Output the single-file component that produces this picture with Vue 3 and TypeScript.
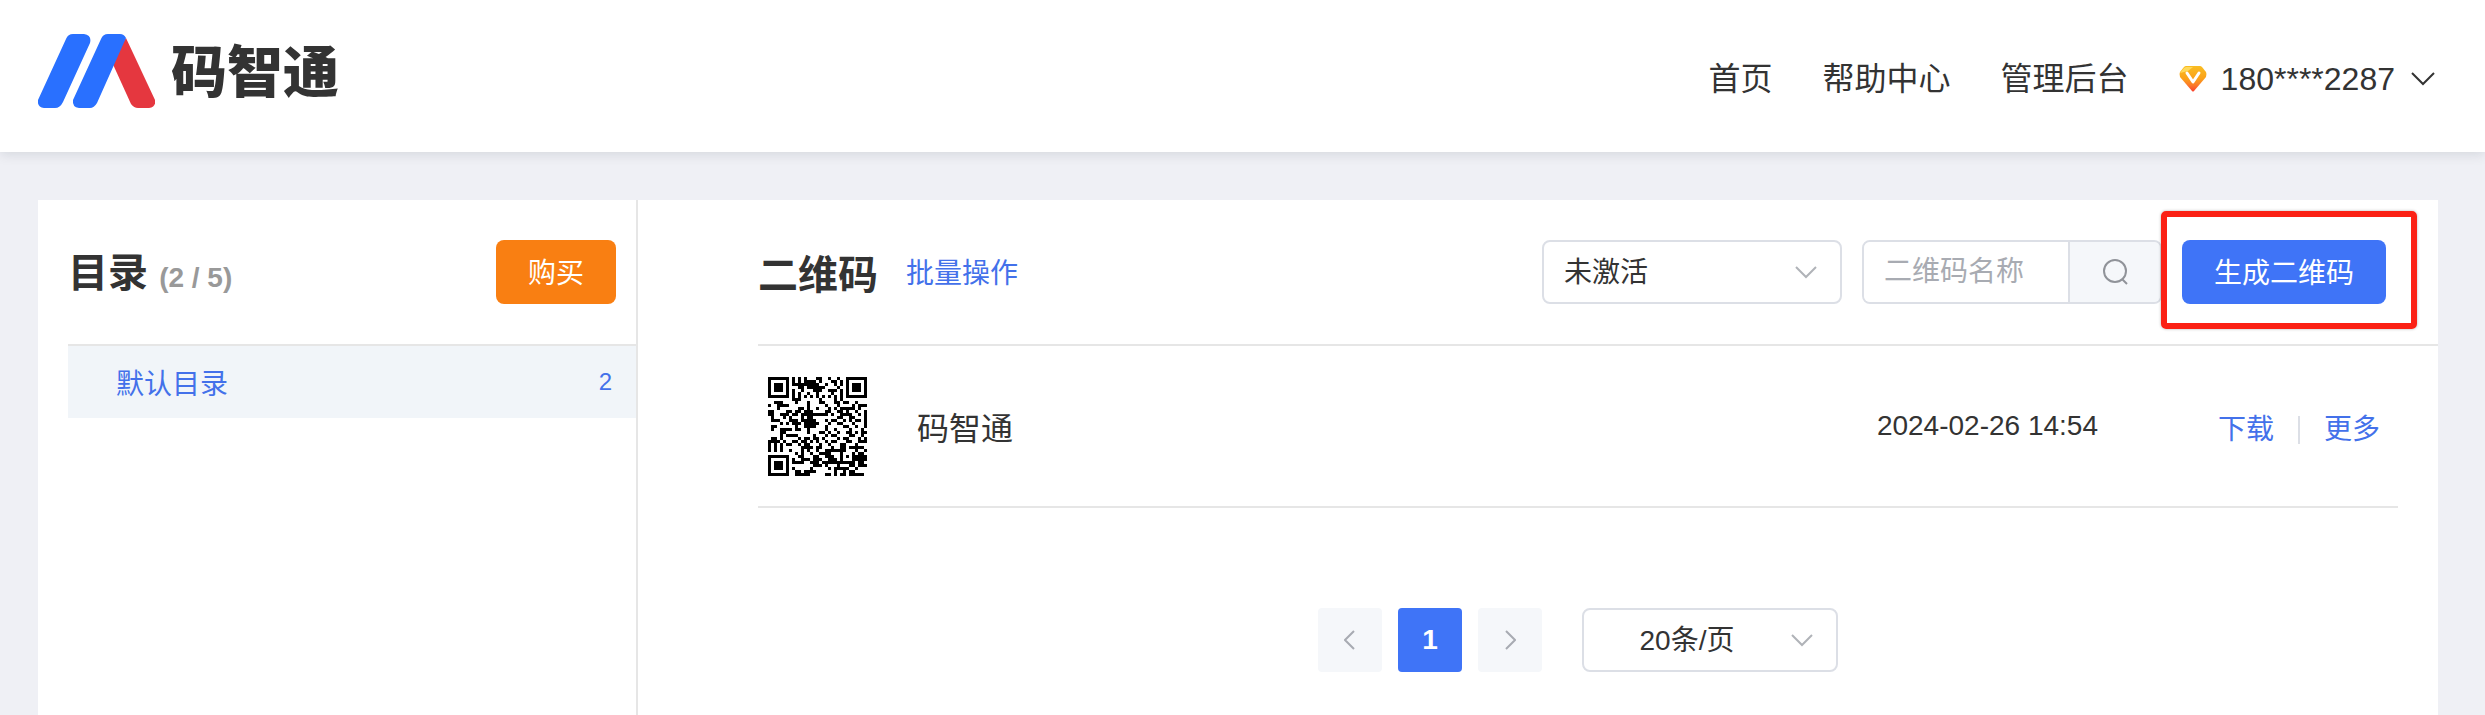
<script setup lang="ts">
import { ref } from 'vue'

interface Directory { name: string; count: number }
interface Code { name: string; createdAt: string }

const navLinks: string[] = ['首页', '帮助中心', '管理后台']
const directories: Directory[] = [{ name: '默认目录', count: 2 }]
const codes: Code[] = [{ name: '码智通', createdAt: '2024-02-26 14:54' }]
const status = ref('未激活')
const pageSize = ref('20条/页')
const keyword = ref('')

const modules: string[] = [
  '111111101010100011001001001111111',
  '100000101010111101000110101000001',
  '101110101111111110010010101011101',
  '101110100011011111100001001011101',
  '101110101001000111001110101011101',
  '100000101010010010000100101000001',
  '111111101010101010101010101111111',
  '000000001110000001000010100000000',
  '001110000100010001100011011001000',
  '100111100000010000010001000010111',
  '000100000011010010001010111110100',
  '110000110110111000011001101001001',
  '110011101101111111110100111100101',
  '010001010001011000000001100110001',
  '011100011101111100010110010101101',
  '000010101110111110001001100010001',
  '011000000100111100010000011001001',
  '010011110110010000010010000100010',
  '000011000000010001101001001101011',
  '000010111100000100010110000110010',
  '011010000010110110100001011000101',
  '111101001101101010010110001100111',
  '101010110010110001001000110001000',
  '101010000001111011000100110111110',
  '101010010001010010011111110001001',
  '000000000101001001111000100010110',
  '111111100011000110011100101011111',
  '100000101001110111001110100011111',
  '101110101111001110111111111110110',
  '101110100000000111010001000110111',
  '101110101000001000001011111001000',
  '100000100110111100000010010110000',
  '111111100111110000011010110111110',
]
const qrPath = modules
  .map((row, y) => [...row].map((bit, x) => (bit === '1' ? `M${x} ${y}h1v1h-1z` : '')).join(''))
  .join('')
</script>

<template>
  <div class="page">
    <header class="topbar">
      <a class="brand" href="#">
        <svg class="brand-mark" viewBox="0 0 117 74" aria-hidden="true">
          <path fill="#2970ff" d="M35 0H46Q54 1 52 9L25 68Q22 74 17 74H6Q-1 73 0 66L28 5Q30 0 35 0Z" />
          <path fill="#e5373f" d="M88 4L117 66Q118 73 111 74H100Q96 74 93 70L73 26Z" />
          <path fill="#2970ff" d="M70 0H82Q86 0 88 4L59 69Q56 74 52 74H41Q34 73 35 66L63 5Q65 0 70 0Z" />
        </svg>
        <span class="brand-name">码智通</span>
      </a>
      <nav class="nav">
        <a v-for="link in navLinks" :key="link" href="#">{{ link }}</a>
        <button class="account" type="button">
          <svg class="gem" viewBox="0 0 28 26" aria-hidden="true">
            <defs>
              <linearGradient id="gem-fill" x1="0" y1="0" x2="0" y2="1">
                <stop offset="0" stop-color="#f9bd22" />
                <stop offset="0.5" stop-color="#fba119" />
                <stop offset="0.75" stop-color="#fb7a2a" />
                <stop offset="1" stop-color="#f9402d" />
              </linearGradient>
            </defs>
            <path fill="url(#gem-fill)" d="M7 0H21Q22 0 23 1L27 6Q28 8 27 11L15 25Q14 26 13 25L1 11Q0 8 1 6L5 1Q6 0 7 0Z" />
            <path fill="#ffd95a" d="M7 1H14L9 5L1 7L5 2Z" />
            <path fill="none" stroke="#fff" stroke-width="3" stroke-linecap="round" stroke-linejoin="round" d="M8 7L14 16L20 7" />
          </svg>
          <span>180****2287</span>
          <svg class="account-arrow" viewBox="0 0 24 14" aria-hidden="true"><path d="M1 1L12 12L23 1" /></svg>
        </button>
      </nav>
    </header>

    <div class="panel">
      <aside class="sidebar">
        <div class="sidebar-head">
          <h2 class="title">目录 <small>(2 / 5)</small></h2>
          <button class="btn buy" type="button">购买</button>
        </div>
        <a v-for="dir in directories" :key="dir.name" class="directory" href="#">
          <span>{{ dir.name }}</span>
          <span class="count">{{ dir.count }}</span>
        </a>
      </aside>

      <main class="content">
        <div class="toolbar">
          <h2 class="title">二维码</h2>
          <a class="batch" href="#">批量操作</a>
          <div class="select status">
            <select v-model="status" aria-label="状态">
              <option>未激活</option>
            </select>
            <svg viewBox="0 0 24 14" aria-hidden="true"><path d="M2 2L12 12L22 2" /></svg>
          </div>
          <form class="search" @submit.prevent>
            <input v-model="keyword" type="text" placeholder="二维码名称" aria-label="二维码名称" />
            <button type="submit" aria-label="搜索">
              <svg viewBox="0 0 24 24" aria-hidden="true"><circle cx="12" cy="11" r="11" /><path d="M19 19L24 24" /></svg>
            </button>
          </form>
          <div class="generate">
            <button class="btn primary" type="button">生成二维码</button>
            <div class="highlight"></div>
          </div>
        </div>

        <ul class="codes">
          <li v-for="code in codes" :key="code.name" class="code">
            <svg class="qr" viewBox="0 0 33 33" shape-rendering="crispEdges" role="img" aria-label="二维码"><path :d="qrPath" /></svg>
            <span class="code-name">{{ code.name }}</span>
            <time>{{ code.createdAt }}</time>
            <div class="actions">
              <a href="#">下载</a>
              <a href="#">更多</a>
            </div>
          </li>
        </ul>

        <div class="pagination">
          <button class="pager" type="button" disabled aria-label="上一页">
            <svg viewBox="0 0 12 20" aria-hidden="true"><path d="M10 1L1 10L10 19" /></svg>
          </button>
          <button class="pager current" type="button">1</button>
          <button class="pager" type="button" disabled aria-label="下一页">
            <svg viewBox="0 0 12 20" aria-hidden="true"><path d="M2 1L11 10L2 19" /></svg>
          </button>
          <div class="select size">
            <select v-model="pageSize" aria-label="每页条数">
              <option>20条/页</option>
            </select>
            <svg viewBox="0 0 24 14" aria-hidden="true"><path d="M2 2L12 12L22 2" /></svg>
          </div>
        </div>
      </main>
    </div>
  </div>
</template>

<style>
body {
  margin: 0;
  background: #eff0f5;
}
</style>

<style scoped>
.page,
.page * {
  box-sizing: border-box;
}
.page {
  display: flex;
  flex-direction: column;
  min-height: 100vh;
  font-family: "Liberation Sans", "Noto Sans CJK SC", sans-serif;
  font-size: 28px;
  color: #333;
}
a {
  color: #4371ea;
  text-decoration: none;
}
button,
select,
input {
  margin: 0;
  padding: 0;
  border: 0;
  font: inherit;
  color: inherit;
}
svg {
  flex: none;
  fill: none;
}
.topbar {
  display: flex;
  justify-content: space-between;
  height: 152px;
  padding: 0 50px 0 38px;
  background: #fff;
  box-shadow: 0 2px 12px rgba(0, 21, 41, 0.12);
}
.brand {
  display: flex;
  gap: 16px;
  height: 142px;
  align-items: center;
  color: #333;
}
.brand-mark {
  width: 117px;
  height: 74px;
}
.brand-name {
  padding-top: 4px;
  font-size: 56px;
  line-height: 72px;
  font-weight: 900;
}
.nav {
  display: flex;
  align-items: center;
  gap: 50px;
  padding-top: 6px;
  font-size: 32px;
  line-height: 40px;
}
.nav a {
  color: #333;
}
.account {
  display: flex;
  align-items: center;
  gap: 14px;
  background: none;
}
.gem {
  width: 28px;
  height: 26px;
}
.account-arrow {
  width: 24px;
  height: 14px;
  margin-left: 2px;
  stroke: #333;
  stroke-width: 2;
}
.panel {
  display: flex;
  flex: 1;
  margin: 48px 47px 0 38px;
  background: #fff;
}
.sidebar {
  width: 600px;
  padding-left: 30px;
  border-right: 2px solid #e6e6e6;
}
.sidebar-head,
.toolbar {
  display: flex;
  align-items: center;
  height: 146px;
  border-bottom: 2px solid #e6e6e6;
}
.sidebar-head {
  justify-content: space-between;
  padding-right: 20px;
}
.title {
  margin: 0;
  padding-top: 6px;
  font-size: 40px;
  line-height: 56px;
  font-weight: 700;
}
.title small {
  font-size: 28px;
  color: #999;
}
.btn {
  height: 64px;
  padding-bottom: 2px;
  border-radius: 8px;
  color: #fff;
}
.buy {
  width: 120px;
  background: #f97f12;
}
.directory {
  display: flex;
  align-items: center;
  justify-content: space-between;
  height: 72px;
  padding: 0 24px 0 48px;
  background: #f1f5f9;
}
.count {
  font-size: 24px;
}
.content {
  flex: 1;
  padding-left: 120px;
}
.toolbar {
  padding-right: 52px;
}
.batch {
  margin: 0 auto 0 28px;
  padding-bottom: 2px;
}
.select {
  position: relative;
  height: 64px;
}
.select select {
  width: 100%;
  height: 100%;
  padding: 0 64px 0 20px;
  border: 2px solid #dcdfe6;
  border-radius: 8px;
  background: #fff;
  appearance: none;
}
.select svg {
  position: absolute;
  top: 25px;
  right: 24px;
  width: 24px;
  height: 14px;
  stroke: #b0b3b8;
  stroke-width: 2;
  pointer-events: none;
}
.status {
  width: 300px;
}
.search {
  display: flex;
  width: 300px;
  height: 64px;
  margin: 0 20px;
  border: 2px solid #dcdfe6;
  border-radius: 8px;
  background: #f5f7fa;
  overflow: hidden;
}
.search input {
  flex: 1;
  min-width: 0;
  padding-left: 20px;
  border-right: 2px solid #dcdfe6;
  background: #fff;
  outline: none;
}
.search input::placeholder {
  color: #a8abb2;
  opacity: 1;
}
.search button {
  display: flex;
  align-items: center;
  justify-content: center;
  width: 90px;
  background: #f5f7fa;
}
.search svg {
  width: 24px;
  height: 24px;
  overflow: visible;
  stroke: #909399;
  stroke-width: 2;
}
.generate {
  position: relative;
}
.primary {
  width: 204px;
  background: #3f74f7;
}
.highlight {
  position: absolute;
  inset: -29px -31px -25px -21px;
  border: 6px solid #fb2115;
  border-radius: 5px;
  box-shadow: 0 0 3px rgba(0, 0, 0, 0.3);
  pointer-events: none;
}
.codes {
  margin: 0 40px 0 0;
  padding: 0;
  list-style: none;
}
.code {
  display: flex;
  align-items: center;
  height: 162px;
  padding: 0 18px 0 10px;
  border-bottom: 2px solid #e6e6e6;
}
.qr {
  width: 99px;
  height: 99px;
  fill: #000;
}
.code-name {
  margin: 0 auto 0 50px;
  font-size: 32px;
}
.actions {
  display: flex;
  margin-left: 120px;
  padding-top: 8px;
}
.actions a {
  line-height: 28px;
}
.actions a + a {
  margin-left: 24px;
  padding-left: 24px;
  border-left: 2px solid #dcdfe6;
}
.pagination {
  display: flex;
  justify-content: center;
  gap: 16px;
  margin: 100px 40px 40px 0;
}
.pager {
  display: flex;
  align-items: center;
  justify-content: center;
  width: 64px;
  height: 64px;
  border-radius: 4px;
  background: #f5f7fa;
}
.pager svg {
  width: 12px;
  height: 20px;
  stroke: #a8abb2;
  stroke-width: 2;
}
.pager.current {
  background: #3f74f7;
  color: #fff;
  font-weight: 700;
}
.size {
  width: 256px;
  margin-left: 24px;
}
.size select {
  padding: 0 46px 0 0;
  text-align: center;
  text-align-last: center;
}
</style>
